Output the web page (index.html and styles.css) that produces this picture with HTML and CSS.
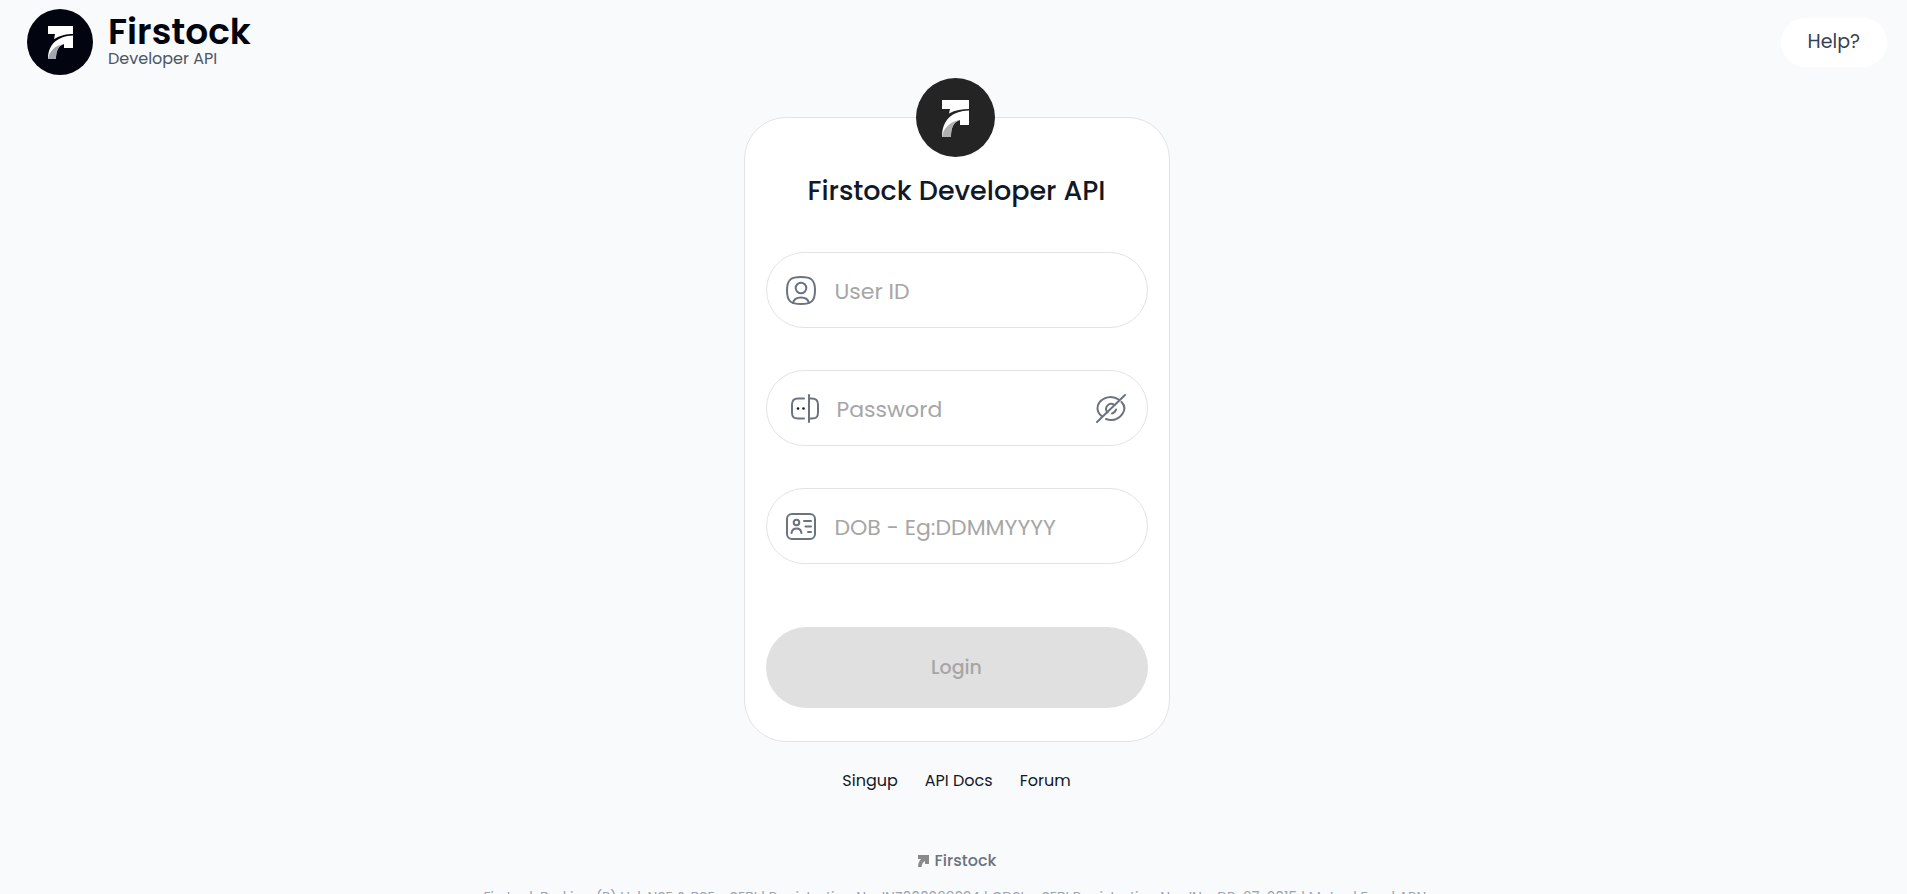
FILE: index.html
```html
<!DOCTYPE html>
<html lang="en">
<head>
    <meta charset="UTF-8">
    <meta name="viewport" content="width=device-width, initial-scale=1.0">
    <title>Firstock Developer API</title>
    <link rel="stylesheet" href="styles.css">
</head>
<body>
    <header class="header">
        <a class="brand" href="#">
            <svg class="brand-logo" viewBox="0 0 66 66" aria-hidden="true">
                <circle cx="33" cy="33" r="33" fill="#02040f"/>
                <path d="M21 17H46V25C40 25 34 26 27 30L28 25H21Z" fill="#fff"/>
                <path d="M21 50C21 35 31 27 46 26.500V39H37V35C31 37 29 42 29 50Z" fill="#fff"/>
                <path d="M21 50C22 43 28 36 37 35C31 37 29 42 29 50Z" fill="#a3a6b1"/>
            </svg>
            <span class="brand-text">
                <span class="brand-name">Firstock</span>
                <span class="brand-sub">Developer API</span>
            </span>
        </a>
        <button class="help" type="button">Help?</button>
    </header>

    <main class="main">
        <section class="card">
            <svg class="badge" viewBox="0 0 79 79" aria-hidden="true">
                <circle cx="39.5" cy="39.5" r="39.5" fill="#242424"/>
                <path d="M26 22H53V31C46 31 39 32 33 35.5L34 31H26Z" fill="#fff"/>
                <path d="M26 59C26 42 36 33 53 32.500V47H44V42C37 44 35 50 35 59Z" fill="#fff"/>
                <path d="M26 59C27 51 34 43 44 42C37 44 35 50 35 59Z" fill="#b0b0b0"/>
            </svg>
            <h1 class="title">Firstock Developer API</h1>
            <form class="form">
                <div class="field">
                    <svg class="icon" viewBox="0 0 32 32" aria-hidden="true">
                        <path d="M16 3C26 3 30 5.500 30 16.500S26 30 16 30S2 27.500 2 16.500S6 3 16 3Z"/>
                        <circle cx="16" cy="14" r="5.300"/>
                        <path d="M8 29C9.500 21.500 22.500 21.500 24 29"/>
                    </svg>
                    <input type="text" placeholder="User ID" aria-label="User ID">
                </div>
                <div class="field field-password">
                    <svg class="icon" viewBox="0 0 32 32" aria-hidden="true">
                        <path d="M15 6.500H9C4.500 6.500 3 8.500 3 12.500V20.500C3 25 4.500 26.500 9 26.500H15M20 3V30M20 6.500H23C27.500 6.500 29 8.500 29 12.500V20.500C29 25 27.500 26.500 23 26.500H20"/>
                        <circle class="dot" cx="9" cy="16.500" r="1.300"/>
                        <circle class="dot" cx="14.500" cy="16.500" r="1.300"/>
                    </svg>
                    <input type="password" placeholder="Password" aria-label="Password">
                    <button class="toggle" type="button" aria-label="Show password">
                        <svg class="icon" viewBox="0 0 32 32" aria-hidden="true">
                            <path d="M24.500 8C14 .5 2.500 8.500 2.500 16.500C2.500 19.500 4 22 7 24.500"/>
                            <path d="M26.500 10C34 17.500 25 28 16 28C14 28 12.500 27.500 11 27"/>
                            <path d="M12.500 20.500C8.500 15.500 14 9.500 19.500 13M21 17.500C20.500 19.500 19 21 17 21.500"/>
                            <path d="M30 3L2 30"/>
                        </svg>
                    </button>
                </div>
                <div class="field">
                    <svg class="icon" viewBox="0 0 32 32" aria-hidden="true">
                        <rect x="2" y="4" width="28" height="25" rx="5"/>
                        <circle cx="11.500" cy="12.500" r="2.800"/>
                        <path d="M6.500 23C7.500 17 15.500 17 16.500 23M19 11H26M20.500 16.500H26M23 22H26"/>
                    </svg>
                    <input type="text" placeholder="DOB - Eg:DDMMYYYY" aria-label="Date of birth">
                </div>
                <button class="login" type="submit" disabled>Login</button>
            </form>
        </section>

        <nav class="links">
            <a href="#">Singup</a>
            <a href="#">API Docs</a>
            <a href="#">Forum</a>
        </nav>

        <footer class="footer">
            <div class="footer-brand">
                <svg class="footer-logo" viewBox="0 0 12 12" aria-hidden="true">
                    <path d="M1 0H12V9H8V6C6 7 5 9 4.500 12H1C1 9 2 6 4 4H1Z"/>
                </svg>
                <span>Firstock</span>
            </div>
            <p class="legal">Firstock Broking (P) Ltd: NSE &amp; BSE - SEBI | Registration No. INZ000269334 | CDSL - SEBI Registration No.: IN - DP-67-2015 | Mutual Fund ARN:</p>
        </footer>
    </main>
</body>
</html>
```
FILE: styles.css
```css
* {
    box-sizing: border-box;
}
body {
    margin: 0;
    font-family: Poppins, Inter, sans-serif;
    background-color: #f9fafc;
    color: #111827;
}
button, input {
    font-family: inherit;
}
a {
    color: inherit;
    text-decoration: none;
}
.header {
    display: flex;
    justify-content: space-between;
    align-items: center;
    padding: 9px 20px 9px 27px;
}
.brand {
    display: flex;
    align-items: center;
    gap: 15px;
}
.brand-logo {
    width: 66px;
    height: 66px;
}
.brand-text {
    display: flex;
    flex-direction: column;
    padding-bottom: 4px;
}
.brand-name {
    font-size: 36px;
    font-weight: 600;
    line-height: 38px;
    color: #02040f;
}
.brand-sub {
    font-size: 16px;
    line-height: 16px;
    color: #4b5563;
}
.help {
    padding: 11px 27px 13px;
    border: none;
    border-radius: 25px;
    background: #fff;
    color: #374151;
    font-size: 19px;
    line-height: 25px;
    cursor: pointer;
}
.main {
    display: flex;
    flex-direction: column;
    align-items: center;
    padding: 33px 0 24px 6px;
}
.card {
    position: relative;
    width: 100%;
    max-width: 426px;
    padding: 52px 21px 33px;
    border: 1px solid #e2e3e5;
    border-radius: 42px;
    background: #fff;
}
.badge {
    position: absolute;
    top: -40px;
    left: 50%;
    width: 79px;
    height: 79px;
    margin-left: -41px;
}
.title {
    margin: 0 0 40px;
    font-size: 27px;
    font-weight: 500;
    line-height: 42px;
    text-align: center;
}
.form {
    display: flex;
    flex-direction: column;
    gap: 42px;
}
.field {
    display: flex;
    align-items: center;
    gap: 18px;
    height: 76px;
    padding: 0 20px 0 18px;
    border: 1px solid #e2e3e5;
    border-radius: 38px;
}
.field-password {
    padding-left: 22px;
    gap: 16px;
}
.field input {
    flex: 1;
    min-width: 0;
    padding: 2px 0 0;
    border: none;
    outline: none;
    background: none;
    font-size: 22px;
    color: #111827;
}
.field input::placeholder {
    color: #a6a6a6;
}
.icon {
    display: block;
    flex: none;
    width: 32px;
    height: 32px;
    fill: none;
    stroke: #6b7280;
    stroke-width: 2;
    stroke-linecap: round;
    stroke-linejoin: round;
}
.dot {
    fill: #111827;
    stroke: none;
}
.toggle {
    padding: 0;
    border: none;
    background: none;
    cursor: pointer;
}
.login {
    height: 81px;
    margin-top: 21px;
    border: none;
    border-radius: 41px;
    background: #e0e0e0;
    color: #a6a6a6;
    font-size: 19px;
    font-weight: 500;
}
.links {
    display: flex;
    gap: 27px;
    margin-top: 27px;
    font-size: 16px;
    line-height: 24px;
}
.footer {
    margin-top: 56px;
    text-align: center;
}
.footer-brand {
    display: flex;
    justify-content: center;
    align-items: center;
    gap: 6px;
    font-size: 16px;
    font-weight: 500;
    line-height: 24px;
    color: #6b7280;
}
.footer-logo {
    width: 12px;
    height: 12px;
    fill: #8a8a8a;
}
.legal {
    margin: 14px 0 0;
    font-size: 14px;
    line-height: 20px;
    color: #9ca3af;
}
```
